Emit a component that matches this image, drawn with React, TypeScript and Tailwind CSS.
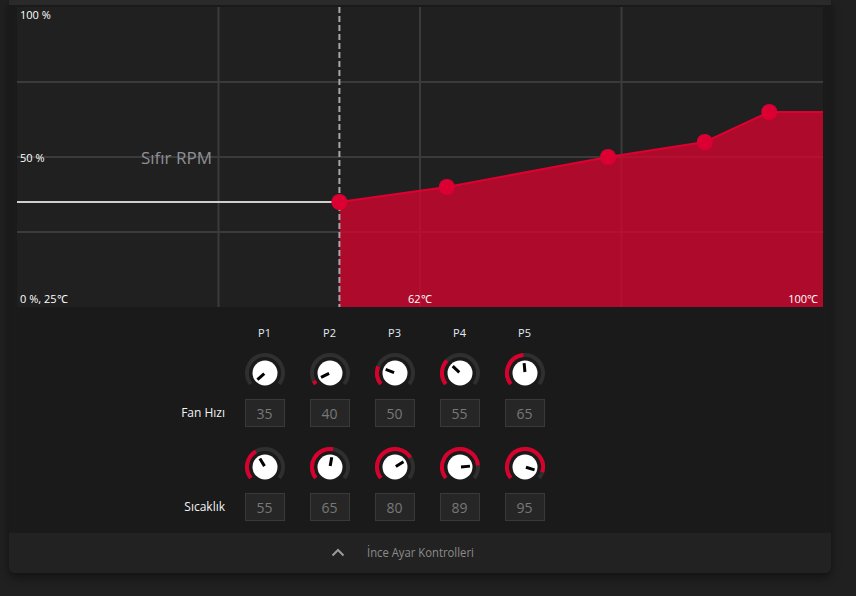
import React from 'react';

const W = 806;
const H = 300;
const tx = (t: number) => ((t - 25) / 75) * W;
const fy = (f: number) => H - f * 3;

const curve: [number, number][] = [
  [55, 35],
  [65, 40],
  [80, 50],
  [89, 55],
  [95, 65],
];

const fanAngles = [-131, -116, -69, -47, -5];
const tempAngles = [-31, 10, 58, 85, 107];

function polar(cx: number, cy: number, r: number, deg: number) {
  const a = (deg * Math.PI) / 180;
  return [cx + r * Math.sin(a), cy - r * Math.cos(a)];
}

function arc(r: number, from: number, to: number) {
  const [x1, y1] = polar(20, 20, r, from);
  const [x2, y2] = polar(20, 20, r, to);
  const large = to - from > 180 ? 1 : 0;
  return `M ${x1} ${y1} A ${r} ${r} 0 ${large} 1 ${x2} ${y2}`;
}

function Knob({ angle }: { angle: number }) {
  const start = -128;
  const [px1, py1] = polar(20, 20, 1, angle);
  const [px2, py2] = polar(20, 20, 10, angle);
  return (
    <svg width="40" height="40" viewBox="0 0 40 40">
      <path d={arc(18, start, 128)} stroke="#2f2f2f" strokeWidth="4" fill="none" />
      {angle > start + 2 && (
        <path d={arc(18, start, angle)} stroke="#d8002c" strokeWidth="4" fill="none" />
      )}
      <circle cx="20" cy="20" r="12.5" fill="#ffffff" />
      <line x1={px1} y1={py1} x2={px2} y2={py2} stroke="#000" strokeWidth="3" />
    </svg>
  );
}

function FanChart() {
  const pts = curve.map(([t, f]) => [tx(t), fy(f)]);
  const last = pts[pts.length - 1];
  const area =
    `M ${pts[0][0]} ${H} ` +
    pts.map(([x, y]) => `L ${x} ${y}`).join(' ') +
    ` L ${W} ${last[1]} L ${W} ${H} Z`;
  const line = pts.map(([x, y], i) => `${i ? 'L' : 'M'} ${x} ${y}`).join(' ') + ` L ${W} ${last[1]}`;

  return (
    <svg width={W} height={H} viewBox={`0 0 ${W} ${H}`} className="block">
      <rect width={W} height={H} fill="#202020" />
      {/* grid */}
      {[1, 2, 3].map((i) => (
        <line key={'v' + i} x1={(W / 4) * i} y1="0" x2={(W / 4) * i} y2={H} stroke="#3b3b3b" strokeWidth="2" />
      ))}
      {[1, 2, 3].map((i) => (
        <line key={'h' + i} x1="0" y1={(H / 4) * i} x2={W} y2={(H / 4) * i} stroke="#3b3b3b" strokeWidth="2" />
      ))}
      <path d={area} fill="#dc0330" fillOpacity="0.75" />
      <line x1="0" y1={pts[0][1]} x2={pts[0][0]} y2={pts[0][1]} stroke="#cfcfcf" strokeWidth="2" />
      <line x1={pts[0][0]} y1="0" x2={pts[0][0]} y2={H} stroke="#a8a8a8" strokeWidth="2" strokeDasharray="6 3" />
      <path d={line} stroke="#e00030" strokeWidth="2" fill="none" />
      {pts.map(([x, y], i) => (
        <circle key={i} cx={x} cy={y} r="8" fill="#dc0032" />
      ))}

      <g className="font-['Open_Sans',sans-serif] text-[11px]" fill="#ffffff">
        <text x="3" y="12">100 %</text>
        <text x="3" y="155">50 %</text>
        <text x="3" y="296">0 %, 25℃</text>
        <text x="391" y="296">62℃</text>
        <text x="801" y="296" textAnchor="end">100℃</text>
      </g>
      <text x="124" y="157" fill="#8d9196" className="font-['Open_Sans',sans-serif] text-[17px]">
        Sıfır RPM
      </text>
    </svg>
  );
}

function ValueBox({ value }: { value: number }) {
  return (
    <div className="flex h-[28px] w-[40px] items-center justify-center border border-[#393939] bg-[#262626] text-[14px] text-[#787878]">
      {value}
    </div>
  );
}

export default function App() {
  const fan = [35, 40, 50, 55, 65];
  const temp = [55, 65, 80, 89, 95];

  return (
    <div className="min-h-screen w-full bg-[#202020] pl-[9px] font-['Open_Sans',sans-serif]">
      <div className="w-[822px] rounded-b-[6px] bg-[#1a1a1a] shadow-[0_4px_10px_rgba(0,0,0,0.45)]">
        <div className="h-[5px] bg-[#2a2a2a]" />
        <div className="px-[8px] pt-[2px]">
          <FanChart />
        </div>

        <div className="pt-[18px]">
          <div className="grid grid-cols-[223px_repeat(5,65px)] items-center">
            <div />
            {['P1', 'P2', 'P3', 'P4', 'P5'].map((p) => (
              <div key={p} className="h-[16px] text-center text-[11px] leading-[16px] text-[#e2eaf4]">
                {p}
              </div>
            ))}
          </div>

          <div className="mt-[12px] grid grid-cols-[223px_repeat(5,65px)] items-center">
            <div />
            {fanAngles.map((a, i) => (
              <div key={i} className="flex justify-center">
                <Knob angle={a} />
              </div>
            ))}
          </div>
          <div className="mt-[6px] grid grid-cols-[223px_repeat(5,65px)] items-center">
            <div className="pr-[7px] text-right text-[12px] text-[#f2f2f2]">Fan Hızı</div>
            {fan.map((v, i) => (
              <div key={i} className="flex justify-center">
                <ValueBox value={v} />
              </div>
            ))}
          </div>

          <div className="mt-[20px] grid grid-cols-[223px_repeat(5,65px)] items-center">
            <div />
            {tempAngles.map((a, i) => (
              <div key={i} className="flex justify-center">
                <Knob angle={a} />
              </div>
            ))}
          </div>
          <div className="mt-[6px] grid grid-cols-[223px_repeat(5,65px)] items-center">
            <div className="pr-[7px] text-right text-[12px] text-[#f2f2f2]">Sıcaklık</div>
            {temp.map((v, i) => (
              <div key={i} className="flex justify-center">
                <ValueBox value={v} />
              </div>
            ))}
          </div>
        </div>

        <div className="mt-[12px] flex h-[40px] items-center rounded-b-[6px] bg-[#222222] pl-[322px]">
          <svg width="14" height="9" viewBox="0 0 14 9" className="mb-[1px]">
            <path d="M1.5 7.5 L7 2 L12.5 7.5" stroke="#9a9a9a" strokeWidth="2" fill="none" />
          </svg>
          <span className="ml-[22px] origin-left scale-x-[0.94] text-[12px] text-[#8c8c8c]">İnce Ayar Kontrolleri</span>
        </div>
      </div>
    </div>
  );
}
